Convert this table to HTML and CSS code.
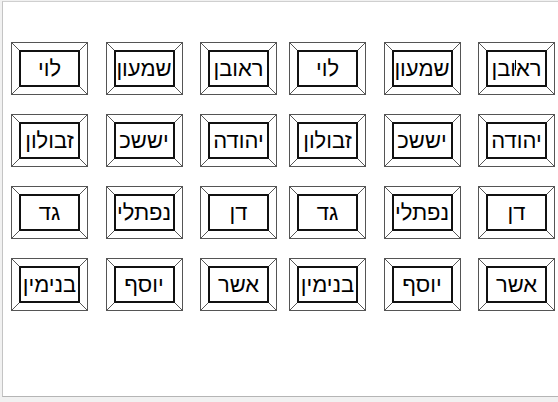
FILE: index.html
```html
<!DOCTYPE html>
<html lang="he">
<head>
<meta charset="utf-8">
<title>שבטים</title>
<link rel="stylesheet" href="styles.css">
</head>
<body>
<div class="page">
  <div class="sheet" dir="rtl">
    <div class="group">
      <div class="frame"><div class="inner"><span class="label">רא<span class="caret"></span>ובן</span></div></div>
      <div class="frame"><div class="inner"><span class="label">שמעון</span></div></div>
      <div class="frame"><div class="inner"><span class="label">לוי</span></div></div>
      <div class="frame"><div class="inner"><span class="label">יהודה</span></div></div>
      <div class="frame"><div class="inner"><span class="label">יששכ</span></div></div>
      <div class="frame"><div class="inner"><span class="label">זבולון</span></div></div>
      <div class="frame"><div class="inner"><span class="label">דן</span></div></div>
      <div class="frame"><div class="inner"><span class="label">נפתלי</span></div></div>
      <div class="frame"><div class="inner"><span class="label">גד</span></div></div>
      <div class="frame"><div class="inner"><span class="label">אשר</span></div></div>
      <div class="frame"><div class="inner"><span class="label">יוסף</span></div></div>
      <div class="frame"><div class="inner"><span class="label">בנימין</span></div></div>
    </div>
    <div class="group">
      <div class="frame"><div class="inner"><span class="label">ראובן</span></div></div>
      <div class="frame"><div class="inner"><span class="label">שמעון</span></div></div>
      <div class="frame"><div class="inner"><span class="label">לוי</span></div></div>
      <div class="frame"><div class="inner"><span class="label">יהודה</span></div></div>
      <div class="frame"><div class="inner"><span class="label">יששכ</span></div></div>
      <div class="frame"><div class="inner"><span class="label">זבולון</span></div></div>
      <div class="frame"><div class="inner"><span class="label">דן</span></div></div>
      <div class="frame"><div class="inner"><span class="label">נפתלי</span></div></div>
      <div class="frame"><div class="inner"><span class="label">גד</span></div></div>
      <div class="frame"><div class="inner"><span class="label">אשר</span></div></div>
      <div class="frame"><div class="inner"><span class="label">יוסף</span></div></div>
      <div class="frame"><div class="inner"><span class="label">בנימין</span></div></div>
    </div>
  </div>
</div>
</body>
</html>
```
FILE: styles.css
```css
html, body {
  margin: 0;
  padding: 0;
}
body {
  background: #f1f1f1;
  width: 558px;
  height: 402px;
  overflow: hidden;
  font-family: "Liberation Sans", Arial, sans-serif;
}
.page {
  margin: 1px 0 0 2px;
  height: 394px;
  background: #fff;
  border-top: 1px solid #cfcfcf;
  border-left: 1px solid #c4c4c4;
  border-bottom: 1px solid #b5b5b5;
  box-sizing: content-box;
}
.sheet {
  display: flex;
  gap: 12px;
  padding: 40px 3px 0 0;
  justify-content: flex-start;
}
.group {
  display: grid;
  grid-template-columns: repeat(3, 77px);
  grid-auto-rows: 53px;
  column-gap: 17.5px;
  row-gap: 19px;
}
.frame {
  box-sizing: border-box;
  border: 1px solid #555;
  padding: 7px;
  background-color: #fff;
  background-origin: padding-box;
  background-repeat: no-repeat;
  background-size: 7px 7px;
  background-image:
    linear-gradient(to top right, transparent calc(50% - 0.7px), #555 50%, transparent calc(50% + 0.7px)),
    linear-gradient(to bottom right, transparent calc(50% - 0.7px), #555 50%, transparent calc(50% + 0.7px)),
    linear-gradient(to bottom right, transparent calc(50% - 0.7px), #555 50%, transparent calc(50% + 0.7px)),
    linear-gradient(to top right, transparent calc(50% - 0.7px), #555 50%, transparent calc(50% + 0.7px));
  background-position: left top, right top, left bottom, right bottom;
}
.inner {
  box-sizing: border-box;
  height: 100%;
  border: 2px solid #111;
  display: flex;
  align-items: center;
  justify-content: center;
}
.label {
  font-size: 22px;
  line-height: 1;
  color: #000;
  white-space: nowrap;
}
.caret {
  display: inline-block;
  width: 1px;
  height: 10px;
  background: #000;
  margin-left: -1px;
  vertical-align: 6px;
}
```
